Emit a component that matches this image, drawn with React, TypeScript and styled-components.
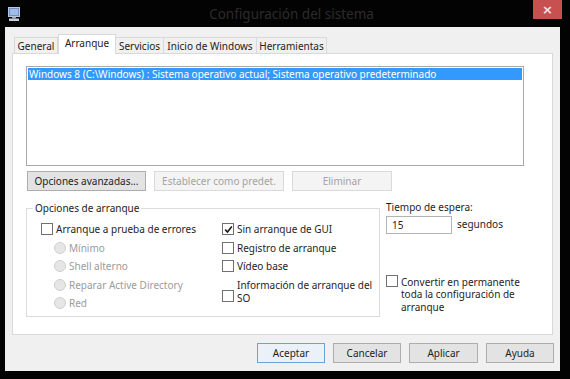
import { FC, ReactNode } from 'react';
import styled, { createGlobalStyle } from 'styled-components';

const GlobalStyle = createGlobalStyle`
  html, body {
    margin: 0;
    padding: 0;
    background: #000;
  }
  body {
    font-family: "Noto Sans", "Open Sans", sans-serif;
    font-size: 10px;
    color: #1e1e1e;
  }
`;

const Window = styled.div`
  width: 570px;
  height: 379px;
  background: #030303;
  display: flex;
  flex-direction: column;
  overflow: hidden;
`;

const TitleBar = styled.div`
  height: 27px;
  display: flex;
  align-items: flex-start;
  flex-shrink: 0;
`;

const AppIcon = styled.div`
  margin: 7px 0 0 8px;
  width: 12px;
  height: 14px;
`;

const Title = styled.div`
  flex: 1;
  text-align: center;
  font-size: 13.5px;
  line-height: 16px;
  padding: 6px 0 0 30px;
  color: #2c2c2c;
`;

const CloseButton = styled.div`
  width: 29px;
  height: 19px;
  margin-right: 8px;
  background: #c75150;
  color: #f6e3e3;
  display: flex;
  align-items: center;
  justify-content: center;
  font-size: 13px;
  font-weight: bold;
  font-family: "DejaVu Sans", sans-serif;
`;

const Client = styled.div`
  margin: 0 10px 0 5px;
  height: 344px;
  background: #f0f0f0;
  display: flex;
  flex-direction: column;
  padding: 8px 0 0 7px;
  box-sizing: border-box;
`;

const TabStrip = styled.div`
  display: flex;
  align-items: flex-end;
  height: 19px;
  padding-left: 2px;
  position: relative;
  z-index: 1;
`;

const Tab = styled.div<{ active?: boolean; w: number }>`
  width: ${({ w }) => w}px;
  height: ${({ active }) => (active ? 20 : 17)}px;
  box-sizing: border-box;
  border: 1px solid #d9d9d9;
  border-left: ${({ active }) => (active ? '1px solid #d9d9d9' : 'none')};
  border-bottom: ${({ active }) => (active ? 'none' : '1px solid #d9d9d9')};
  background: ${({ active }) => (active ? '#fff' : '#f0f0f0')};
  display: flex;
  align-items: center;
  justify-content: center;
  padding-bottom: ${({ active }) => (active ? '3px' : '0')};
  white-space: nowrap;
  color: #222;

  &:first-child {
    border-left: 1px solid #d9d9d9;
  }
`;

const Panel = styled.div`
  width: 541px;
  height: 282px;
  margin-top: -1px;
  box-sizing: border-box;
  background: #fff;
  border: 1px solid #d9d9d9;
  padding: 12px 0 0 13px;
  display: flex;
  flex-direction: column;
`;

const ListBox = styled.div`
  width: 498px;
  height: 100px;
  box-sizing: border-box;
  border: 1px solid #a9a9a9;
  padding: 1px;
`;

const ListItem = styled.div<{ selected?: boolean }>`
  height: 12px;
  line-height: 12px;
  padding-left: 1px;
  background: ${({ selected }) => (selected ? '#3399ff' : 'transparent')};
  color: ${({ selected }) => (selected ? '#fff' : '#222')};
  white-space: nowrap;
  overflow: hidden;
`;

const ButtonRow = styled.div`
  display: flex;
  gap: 8px;
  margin-top: 5px;
  padding-left: 1px;
`;

const Button = styled.div<{ w: number; disabled?: boolean; primary?: boolean }>`
  width: ${({ w }) => w}px;
  height: 20px;
  box-sizing: border-box;
  display: flex;
  align-items: center;
  justify-content: center;
  white-space: nowrap;
  border: 1px solid
    ${({ disabled, primary }) =>
      disabled ? '#dadada' : primary ? '#6aa3d8' : '#adadad'};
  background: ${({ disabled, primary }) =>
    disabled ? '#f4f4f4' : primary ? '#eaf1f8' : '#e3e3e3'};
  color: ${({ disabled }) => (disabled ? '#a3a3a3' : '#1e1e1e')};
`;

const Lower = styled.div`
  display: flex;
  margin-top: 10px;
  gap: 6px;
`;

const GroupBox = styled.fieldset`
  margin: 0;
  width: 354px;
  height: 116px;
  box-sizing: border-box;
  border: 1px solid #dcdcdc;
  padding: 5px 0 0 14px;
  display: grid;
  grid-template-columns: 181px 1fr;
  align-content: start;

  legend {
    padding: 0 2px;
    margin-left: -8px;
    color: #222;
    line-height: 14px;
  }
`;

const Column = styled.div`
  display: flex;
  flex-direction: column;
`;

const Row = styled.div<{ indent?: number; h?: number }>`
  display: flex;
  align-items: center;
  height: ${({ h }) => h ?? 18.5}px;
  padding-left: ${({ indent }) => indent ?? 0}px;
  white-space: nowrap;
`;

const Box = styled.div<{ offset?: number }>`
  width: 12px;
  height: 12px;
  box-sizing: border-box;
  border: 1px solid #707070;
  background: #fff;
  flex-shrink: 0;
  margin: ${({ offset }) => offset ?? 0}px 3px 0 0;
  display: flex;
  align-items: center;
  justify-content: center;
`;

const Radio = styled.div`
  width: 12px;
  height: 12px;
  box-sizing: border-box;
  border-radius: 50%;
  border: 1px solid #cfcfcf;
  background: #e6e6e6;
  flex-shrink: 0;
  margin-right: 3px;
`;

const Label = styled.span<{ disabled?: boolean }>`
  color: ${({ disabled }) => (disabled ? '#9b9b9b' : '#1e1e1e')};
  line-height: 12.5px;
`;

const SideColumn = styled.div`
  display: flex;
  flex-direction: column;
`;

const TimeoutRow = styled.div`
  display: flex;
  align-items: center;
  gap: 5px;
  margin-top: 2px;
`;

const TextInput = styled.div`
  width: 66px;
  height: 18px;
  box-sizing: border-box;
  border: 1px solid #b4b4b4;
  background: #fff;
  padding-left: 5px;
  line-height: 16px;
`;

const PermanentRow = styled.div`
  display: flex;
  align-items: flex-start;
  margin-top: 42px;
`;

const Footer = styled.div`
  display: flex;
  justify-content: flex-end;
  gap: 8px;
  margin-top: 8px;
  width: 542px;
`;

const CheckMark = () => (
  <svg width="9" height="9" viewBox="0 0 9 9">
    <path d="M1.2 4.6 L3.5 7 L7.8 1.6" fill="none" stroke="#1a1a1a" strokeWidth="1.6" />
  </svg>
);

const Check: FC<{ checked?: boolean; children: ReactNode }> = ({ checked, children }) => (
  <Row>
    <Box>{checked && <CheckMark />}</Box>
    <Label>{children}</Label>
  </Row>
);

const RadioItem: FC<{ children: ReactNode }> = ({ children }) => (
  <Row indent={13}>
    <Radio />
    <Label disabled>{children}</Label>
  </Row>
);

const tabs = [
  { label: 'General', w: 44 },
  { label: 'Arranque', w: 58, active: true },
  { label: 'Servicios', w: 48 },
  { label: 'Inicio de Windows', w: 93 },
  { label: 'Herramientas', w: 70 },
];

export default function App() {
  return (
    <>
      <GlobalStyle />
      <Window>
        <TitleBar>
          <AppIcon>
            <svg width="12" height="14" viewBox="0 0 12 14">
              <rect x="0.5" y="0.5" width="11" height="9" fill="#6f8fc9" stroke="#b9c8e2" />
              <rect x="2" y="2" width="8" height="6" fill="#a4bbe8" />
              <rect x="4" y="10" width="4" height="1.5" fill="#9aa3ad" />
              <rect x="1" y="11.5" width="10" height="2.5" fill="#c8cdd2" />
            </svg>
          </AppIcon>
          <Title>Configuración del sistema</Title>
          <CloseButton>×</CloseButton>
        </TitleBar>
        <Client>
          <TabStrip>
            {tabs.map((t) => (
              <Tab key={t.label} w={t.w} active={t.active}>
                {t.label}
              </Tab>
            ))}
          </TabStrip>
          <Panel>
            <ListBox>
              <ListItem selected>
                Windows 8 (C:\Windows) : Sistema operativo actual; Sistema operativo predeterminado
              </ListItem>
            </ListBox>
            <ButtonRow>
              <Button w={119}>Opciones avanzadas...</Button>
              <Button w={130} disabled>
                Establecer como predet.
              </Button>
              <Button w={100} disabled>
                Eliminar
              </Button>
            </ButtonRow>
            <Lower>
              <GroupBox>
                <legend>Opciones de arranque</legend>
                <Column>
                  <Check>Arranque a prueba de errores</Check>
                  <RadioItem>Mínimo</RadioItem>
                  <RadioItem>Shell alterno</RadioItem>
                  <RadioItem>Reparar Active Directory</RadioItem>
                  <RadioItem>Red</RadioItem>
                </Column>
                <Column>
                  <Check checked>Sin arranque de GUI</Check>
                  <Check>Registro de arranque</Check>
                  <Check>Vídeo base</Check>
                  <Row h={32}>
                    <Box offset={8} />
                    <Label>
                      Información de arranque del
                      <br />
                      SO
                    </Label>
                  </Row>
                </Column>
              </GroupBox>
              <SideColumn>
                <Label>Tiempo de espera:</Label>
                <TimeoutRow>
                  <TextInput>15</TextInput>
                  <Label>segundos</Label>
                </TimeoutRow>
                <PermanentRow>
                  <Box offset={-1} />
                  <Label>
                    Convertir en permanente
                    <br />
                    toda la configuración de
                    <br />
                    arranque
                  </Label>
                </PermanentRow>
              </SideColumn>
            </Lower>
          </Panel>
          <Footer>
            <Button w={68} primary>
              Aceptar
            </Button>
            <Button w={68}>Cancelar</Button>
            <Button w={69}>Aplicar</Button>
            <Button w={68}>Ayuda</Button>
          </Footer>
        </Client>
      </Window>
    </>
  );
}
